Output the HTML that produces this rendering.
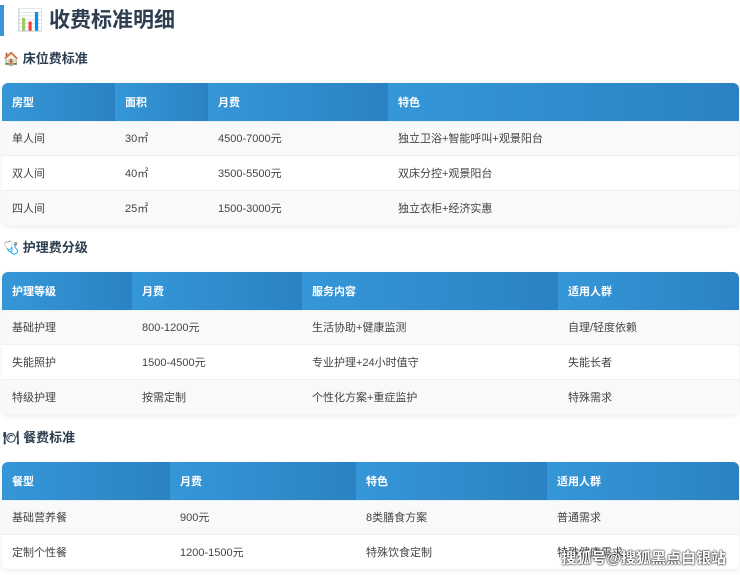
<!DOCTYPE html>
<html><head><meta charset="utf-8">
<style>
*{margin:0;padding:0;box-sizing:border-box}
body{width:740px;height:575px;overflow:hidden;background:#fff;font-family:"Liberation Sans","Noto Sans CJK SC",sans-serif;color:#333;position:relative}
.h1{position:absolute;left:0;top:5px;height:31px;border-left:4px solid #3a95d5;padding-left:13px;font-size:21px;font-weight:bold;color:#2c3e50;line-height:31px}
.h2{position:absolute;left:3px;font-size:13px;font-weight:bold;color:#2c3e50;line-height:18px}
table{position:absolute;left:2px;width:737px;border-collapse:collapse;border-radius:6px;overflow:hidden;box-shadow:0 2px 6px rgba(0,0,0,.08);font-size:11px}
th{background:linear-gradient(90deg,#3597d8,#2b82c2);color:#fff;text-align:left;font-weight:bold;height:38px;padding-left:10px}
td{height:34.5px;padding-left:10px;color:#444;border-top:1px solid #eef0f2}
tr:nth-child(even) td{background:#f7f9fb}
.wm{position:absolute;right:14px;top:547px;font-size:15px;color:#fff;font-weight:bold;text-shadow:0 0 2px #000,0 0 1px #000;letter-spacing:0}
</style></head><body>
<div class="h1">📊 收费标准明细</div>
<div class="h2" style="top:50px">🏠 床位费标准</div>
<table style="top:83px">
<tr><th style="width:113px">房型</th><th style="width:93px">面积</th><th style="width:180px">月费</th><th>特色</th></tr>
<tr><td>单人间</td><td>30㎡</td><td>4500-7000元</td><td>独立卫浴+智能呼叫+观景阳台</td></tr>
<tr><td>双人间</td><td>40㎡</td><td>3500-5500元</td><td>双床分控+观景阳台</td></tr>
<tr><td>四人间</td><td>25㎡</td><td>1500-3000元</td><td>独立衣柜+经济实惠</td></tr>
</table>
<div class="h2" style="top:239px">🩺 护理费分级</div>
<table style="top:272px">
<tr><th style="width:130px">护理等级</th><th style="width:170px">月费</th><th style="width:256px">服务内容</th><th>适用人群</th></tr>
<tr><td>基础护理</td><td>800-1200元</td><td>生活协助+健康监测</td><td>自理/轻度依赖</td></tr>
<tr><td>失能照护</td><td>1500-4500元</td><td>专业护理+24小时值守</td><td>失能长者</td></tr>
<tr><td>特级护理</td><td>按需定制</td><td>个性化方案+重症监护</td><td>特殊需求</td></tr>
</table>
<div class="h2" style="top:429px">🍽 餐费标准</div>
<table style="top:462px">
<tr><th style="width:168px">餐型</th><th style="width:186px">月费</th><th style="width:191px">特色</th><th>适用人群</th></tr>
<tr><td>基础营养餐</td><td>900元</td><td>8类膳食方案</td><td>普通需求</td></tr>
<tr><td>定制个性餐</td><td>1200-1500元</td><td>特殊饮食定制</td><td>特殊健康需求</td></tr>
</table>
<div class="wm">搜狐号@搜狐黑点白银站</div>
</body></html>
